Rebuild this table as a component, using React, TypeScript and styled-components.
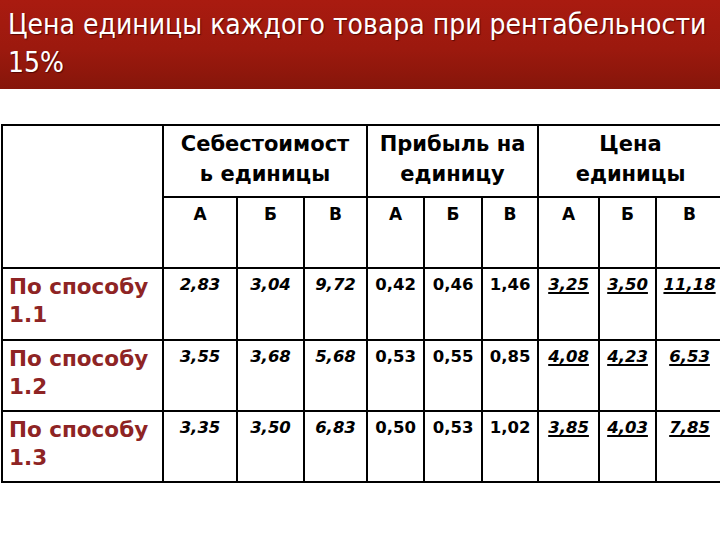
import React from "react";
import styled, { createGlobalStyle } from "styled-components";

const Global = createGlobalStyle`
  html, body { margin: 0; padding: 0; background: #fff; }
  body { width: 720px; height: 540px; overflow: hidden; }
`;

const Page = styled.div`
  width: 720px;
  height: 540px;
  display: flex;
  flex-direction: column;
`;

const TitleBar = styled.header`
  height: 89px;
  box-sizing: border-box;
  padding: 6px 8px 0 8px;
  background: linear-gradient(180deg, #a91b10 0%, #9c190e 55%, #86160a 100%);
`;

const Title = styled.h1`
  margin: 0;
  font-family: "Liberation Sans Narrow", "DejaVu Sans Condensed", "Liberation Sans", sans-serif;
  font-weight: normal;
  font-size: 28px;
  line-height: 38px;
  color: #fff;
  text-shadow: 1px 1px 1px rgba(60, 0, 0, 0.7);
`;

const TableWrap = styled.div`
  padding: 35px 0 0 1px;
`;

const Table = styled.table`
  border-collapse: collapse;
  table-layout: fixed;
  width: 721px;
  font-family: "DejaVu Sans", Verdana, sans-serif;
  font-weight: bold;
  color: #000;
`;

const Cell = styled.td<{ $h?: number }>`
  border: 2px solid #000;
  padding: 0;
  vertical-align: top;
  text-align: center;
  height: ${(p) => p.$h ?? 70}px;
  box-sizing: border-box;
  overflow: hidden;
  white-space: nowrap;
`;

const GroupHead = styled(Cell)`
  font-size: 21px;
  line-height: 30px;
  padding-top: 3px;
`;

const SubHead = styled(Cell)`
  font-size: 17px;
  line-height: 20px;
  padding-top: 6px;
`;

const RowLabel = styled(Cell)`
  text-align: left;
  color: #8e2424;
  font-size: 21.5px;
  line-height: 28px;
  padding: 4px 0 0 6px;
`;

const Value = styled(Cell)<{ $kind: "cost" | "profit" | "price" }>`
  font-size: 16.5px;
  line-height: 20px;
  padding-top: 6px;
  font-style: ${(p) => (p.$kind === "profit" ? "normal" : "italic")};
  text-decoration: ${(p) => (p.$kind === "price" ? "underline" : "none")};
  text-decoration-thickness: 2px;
  text-underline-offset: 2px;
`;

const widths = [161, 74, 67, 63, 57, 58, 56, 61, 57, 67];

const rows = [
  { label: ["По способу", "1.1"], cost: ["2,83", "3,04", "9,72"], profit: ["0,42", "0,46", "1,46"], price: ["3,25", "3,50", "11,18"], h: 72 },
  { label: ["По способу", "1.2"], cost: ["3,55", "3,68", "5,68"], profit: ["0,53", "0,55", "0,85"], price: ["4,08", "4,23", "6,53"], h: 71 },
  { label: ["По способу", "1.3"], cost: ["3,35", "3,50", "6,83"], profit: ["0,50", "0,53", "1,02"], price: ["3,85", "4,03", "7,85"], h: 71 },
];

const letters = ["А", "Б", "В"];

export default function App() {
  return (
    <>
      <Global />
      <Page>
        <TitleBar>
          <Title>
            Цена единицы каждого товара при рентабельности
            <br />
            15%
          </Title>
        </TitleBar>
        <TableWrap>
          <Table>
            <colgroup>
              {widths.map((w, i) => (
                <col key={i} style={{ width: w }} />
              ))}
            </colgroup>
            <tbody>
              <tr>
                <Cell rowSpan={2} $h={143} />
                <GroupHead colSpan={3} $h={72}>
                  Себестоимост
                  <br />ь единицы
                </GroupHead>
                <GroupHead colSpan={3} $h={72}>
                  Прибыль на
                  <br />
                  единицу
                </GroupHead>
                <GroupHead colSpan={3} $h={72}>
                  Цена
                  <br />
                  единицы
                </GroupHead>
              </tr>
              <tr>
                {[0, 1, 2].flatMap((g) =>
                  letters.map((l) => (
                    <SubHead key={`${g}-${l}`} $h={71}>
                      {l}
                    </SubHead>
                  ))
                )}
              </tr>
              {rows.map((r, i) => (
                <tr key={i}>
                  <RowLabel $h={r.h}>
                    {r.label[0]}
                    <br />
                    {r.label[1]}
                  </RowLabel>
                  {r.cost.map((v, j) => (
                    <Value key={`c${j}`} $kind="cost" $h={r.h}>{v}</Value>
                  ))}
                  {r.profit.map((v, j) => (
                    <Value key={`p${j}`} $kind="profit" $h={r.h}>{v}</Value>
                  ))}
                  {r.price.map((v, j) => (
                    <Value key={`r${j}`} $kind="price" $h={r.h}>{v}</Value>
                  ))}
                </tr>
              ))}
            </tbody>
          </Table>
        </TableWrap>
      </Page>
    </>
  );
}
